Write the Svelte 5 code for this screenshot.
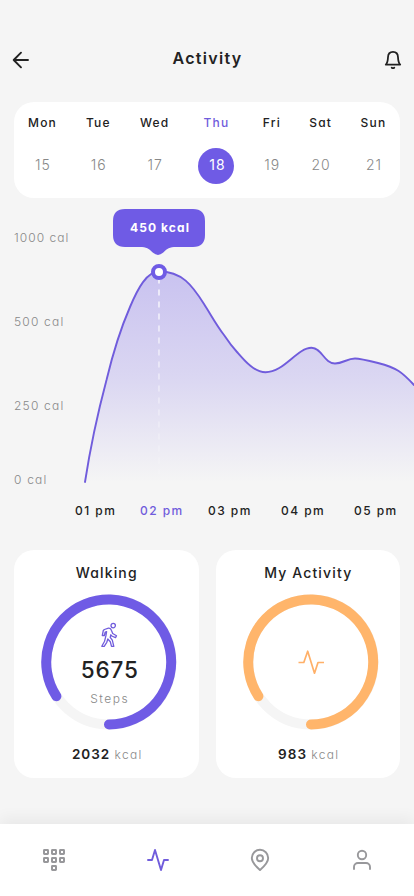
<script>
  const days = [
    { name: 'Mon', date: 15, width: 29 },
    { name: 'Tue', date: 16, width: 25 },
    { name: 'Wed', date: 17, width: 30 },
    { name: 'Thu', date: 18, width: 36, active: true },
    { name: 'Fri', date: 19, width: 17 },
    { name: 'Sat', date: 20, width: 23 },
    { name: 'Sun', date: 21, width: 25 }
  ];
  const levels = ['1000 cal', '500 cal', '250 cal', '0 cal'];
  const hours = ['01 pm', '02 pm', '03 pm', '04 pm', '05 pm'];
  const curve =
    'M85 284C89 258 98 214 106.500 182C112.500 157 120 132 130 109C138 90 147 73.500 159 73.500C182 73.500 192 87 204 106C211 117 217 128 224 137C228 143 232 148.500 237 154C244 162 254 174.300 265.500 174.300C284 174.300 297 149.800 311.500 149.800C322 149.800 324 165.500 335 165.500C343 165.500 347 160.500 355 160.500C359 160.500 370 163 378 165C397 170 402 174 414 187';
</script>

{#snippet ring(color)}
  <svg class="ring" viewBox="0 0 136 136" fill="none" stroke-width="10">
    <circle cx="68" cy="68" r="62.500" stroke="#f5f5f5" />
    <path d="M68 130.500A62.500 62.500 0 1 0 15.400 102.200" stroke={color} stroke-linecap="round" />
  </svg>
{/snippet}

<div class="screen">
  <header>
    <svg class="back" width="24" height="24" viewBox="0 0 24 24" fill="none" stroke="#222" stroke-width="1.900" stroke-linecap="round" stroke-linejoin="round">
      <path d="M19 12H4.700M12 4.700L4.700 12L12 19.300" />
    </svg>
    <h1>Activity</h1>
    <svg class="bell" width="20" height="22" viewBox="0 0 20 22" fill="none" stroke="#222" stroke-width="1.800" stroke-linejoin="round" stroke-linecap="round">
      <path d="M2.800 15.600H17.200C15.600 14.200 15.200 12.400 15 8.200C14.900 4.600 13 2.800 10 2.800S5.100 4.600 5 8.200C4.800 12.400 4.400 14.200 2.800 15.600Z" />
      <path d="M8.700 18.600C9.400 19.400 10.600 19.400 11.300 18.600" />
    </svg>
  </header>

  <section class="week">
    {#each days as d}
      <div class="day" class:active={d.active} style:width="{d.width}px">
        <span class="name">{d.name}</span>
        <span class="date">{d.date}</span>
      </div>
    {/each}
  </section>

  <section class="chart">
    <svg class="plot" width="414" height="294" viewBox="0 0 414 294" fill="none">
      <defs>
        <linearGradient id="area" x1="0" y1="73" x2="0" y2="284" gradientUnits="userSpaceOnUse">
          <stop offset="0" stop-color="#6f5be5" stop-opacity=".33" />
          <stop offset=".5" stop-color="#6f5be5" stop-opacity=".2" />
          <stop offset="1" stop-color="#6f5be5" stop-opacity="0" />
        </linearGradient>
        <linearGradient id="dash" x1="0" y1="80" x2="0" y2="274" gradientUnits="userSpaceOnUse">
          <stop offset="0" stop-color="#fff" stop-opacity=".75" />
          <stop offset="1" stop-color="#fff" stop-opacity=".1" />
        </linearGradient>
      </defs>
      <path d="{curve}V284Z" fill="url(#area)" />
      <path d={curve} stroke="#705cdc" stroke-width="1.900" stroke-linecap="round" />
      <path d="M159 79.500L158.900 276" stroke="url(#dash)" stroke-width="1.800" stroke-dasharray="6 6" />
      <circle cx="159" cy="74" r="6" fill="#fff" stroke="#6f5be5" stroke-width="4" />
      <path d="M125 11H193Q205 11 205 23V37Q205 49 193 49H174C168 49.300 166 52 163 54.800Q158 59 153 54.800C150 52 148 49.300 142 49H125Q113 49 113 37V23Q113 11 125 11Z" fill="#6f5be5" />
    </svg>
    <div class="levels">
      {#each levels as l}<span>{l}</span>{/each}
    </div>
    <strong class="tip">450 kcal</strong>
  </section>

  <div class="hours">
    {#each hours as h, i}<span class:active={i === 1}>{h}</span>{/each}
  </div>

  <section class="cards">
    <article>
      <h2>Walking</h2>
      <div class="dial">
        {@render ring('#6f5be5')}
        <div class="inside">
          <svg class="walker" width="18" height="26" viewBox="0 0 18 26" fill="none" stroke="#705cdc" stroke-width="1.300" stroke-linejoin="round">
            <circle cx="13.200" cy="3.600" r="2.200" />
            <path d="M4.400 7.500L8.500 6.200C10.300 5.900 11 7 11.500 8.500L12.700 11.500L16.500 13.700L15.500 15.700L11.800 14L10.800 12.800L10.200 15.300L12.300 18.200L13.800 24.300H11.500L10.300 19.700L7.800 17L6.800 20.300L4.200 24.300H1.800L4.600 19.200L6 13.400L6.600 9.600L5.200 10L4.400 13.500H2.300L3.300 8.500Z" />
          </svg>
          <strong>5675</strong>
          <small>Steps</small>
        </div>
      </div>
      <p><b>2032</b> <span>kcal</span></p>
    </article>
    <article>
      <h2>My Activity</h2>
      <div class="dial">
        {@render ring('#ffb56b')}
        <div class="inside centered">
          <svg width="28" height="26" viewBox="0 0 28 26" fill="none" stroke="#ffb068" stroke-width="1.700" stroke-linejoin="round">
            <path d="M1.500 13.500H6.800L10.700 2.200L17.500 24.200L21 13.500H27" />
          </svg>
        </div>
      </div>
      <p><b>983</b> <span>kcal</span></p>
    </article>
  </section>

  <nav>
    <svg width="24" height="24" viewBox="0 0 24 24" fill="none" stroke="#98989b" stroke-width="2">
      {#each [[2, 2], [10, 2], [18, 2], [2, 10], [10, 10], [18, 10], [10, 18]] as [x, y]}
        <rect {x} {y} width="4" height="4" rx=".4" />
      {/each}
    </svg>
    <svg class="pulse" width="24" height="24" viewBox="0 0 24 24" fill="none" stroke="#705cdc" stroke-width="1.900" stroke-linejoin="round" stroke-linecap="round">
      <path d="M2 12H6L9 2L15 22L18 12H22" />
    </svg>
    <svg class="pin" width="24" height="24" viewBox="0 0 24 24" fill="none" stroke="#98989b" stroke-width="1.900" stroke-linejoin="round">
      <path d="M12 22C8.800 19.200 3.800 15 3.800 10A8.200 8.200 0 0 1 20.200 10C20.200 15 15.200 19.200 12 22Z" />
      <circle cx="12" cy="10.200" r="3" />
    </svg>
    <svg width="24" height="24" viewBox="0 0 24 24" fill="none" stroke="#98989b" stroke-width="1.900" stroke-linecap="round">
      <circle cx="12" cy="7" r="4.200" />
      <path d="M4 21V19A4 4 0 0 1 8 15H16A4 4 0 0 1 20 19V21" />
    </svg>
  </nav>
</div>

<style>
  :global(body) {
    background: #f5f5f5;
  }
  .screen {
    box-sizing: border-box;
    width: 414px;
    height: 896px;
    overflow: hidden;
    display: flex;
    flex-direction: column;
    background: #f5f5f5;
    color: #222;
    font-family: Inter, 'Open Sans', sans-serif;
    font-feature-settings: 'cv11';
    font-size: 12px;
    letter-spacing: 1px;
  }
  header {
    box-sizing: border-box;
    height: 102px;
    padding: 15px 11px 0 9px;
    display: flex;
    align-items: center;
    justify-content: space-between;
  }
  .back { margin-top: 3px; }
  .bell { margin-top: 2px; }
  h1 {
    margin: -2px 0 0 -1px;
    font-size: 16px;
    font-weight: 600;
    letter-spacing: 1.300px;
  }
  .week {
    box-sizing: border-box;
    height: 96px;
    margin: 0 14px;
    padding: 13px 14px 0;
    border-radius: 20px;
    background: #fff;
    display: flex;
    justify-content: space-between;
  }
  .day {
    display: flex;
    flex-direction: column;
    align-items: center;
    white-space: nowrap;
  }
  .name {
    line-height: 15px;
    height: 33px;
    font-weight: 450;
    letter-spacing: 1.200px;
    margin-left: -1px;
    margin-right: -1px;
  }
  .date {
    width: 36px;
    height: 36px;
    margin: 0 -10px;
    border-radius: 50%;
    line-height: 34px;
    text-align: center;
    text-indent: 1px;
    font-size: 14px;
    font-weight: 300;
    color: #888;
  }
  .active .name { color: #705cdc; }
  .active .date {
    background: #6f5be5;
    color: #fff;
    font-weight: 400;
    text-indent: 2px;
  }
  .chart {
    display: grid;
    height: 294px;
  }
  .chart > * { grid-area: 1 / 1; }
  .levels {
    display: grid;
    grid-template-rows: 84px 84px 74px 20px;
    padding: 30px 0 0 14px;
    line-height: 20px;
    font-weight: 300;
    color: #888;
    letter-spacing: 1.200px;
  }
  .levels span:first-child { letter-spacing: 1.050px; }
  .tip {
    justify-self: start;
    margin: 20px 0 0 113px;
    width: 94px;
    height: 20px;
    line-height: 20px;
    text-align: center;
    color: #fff;
    font-weight: 700;
    letter-spacing: 1.100px;
  }
  .hours {
    box-sizing: border-box;
    height: 58px;
    padding: 10px 0 0 75px;
    display: grid;
    grid-template-columns: 65px 68px 73px 73px auto;
    line-height: 18px;
    font-weight: 450;
    letter-spacing: 1.450px;
    white-space: nowrap;
  }
  .hours .active { color: #705cdc; }
  .cards {
    display: flex;
    gap: 17px;
    padding: 0 14px;
  }
  article {
    box-sizing: border-box;
    flex: 1;
    height: 228px;
    padding-top: 14px;
    border-radius: 20px;
    background: #fff;
    display: flex;
    flex-direction: column;
    align-items: center;
  }
  h2 {
    margin: 0 0 12px;
    height: 18px;
    line-height: 18px;
    font-size: 14px;
    font-weight: 500;
    letter-spacing: 1.150px;
    text-indent: 1px;
  }
  .dial {
    display: grid;
    width: 136px;
    height: 136px;
    margin-left: 6px;
  }
  .dial > * { grid-area: 1 / 1; }
  .inside {
    display: flex;
    flex-direction: column;
    align-items: center;
    padding-top: 28px;
  }
  .centered {
    padding: 0;
    justify-content: center;
  }
  .inside strong {
    margin: 5px 0 0 1px;
    font-size: 22.500px;
    line-height: 33px;
    font-weight: 500;
    letter-spacing: .900px;
  }
  .inside small {
    margin: 4.500px 0 0 1px;
    font-size: 12px;
    line-height: 16px;
    font-weight: 300;
    color: #888;
    letter-spacing: 1.500px;
  }
  p {
    margin: 14px 0 0 2px;
    line-height: 20px;
    white-space: nowrap;
  }
  p b {
    font-size: 13.500px;
    font-weight: 600;
  }
  p span {
    font-weight: 300;
    color: #888;
    letter-spacing: 1.300px;
  }
  nav {
    box-sizing: border-box;
    margin-top: auto;
    height: 72px;
    padding: 0 40px 0 42px;
    background: #fff;
    box-shadow: 0 -6px 14px rgba(0, 0, 0, .05);
    display: flex;
    align-items: center;
    justify-content: space-between;
  }
  .pulse { margin: 0 -1px 0 1px; }
  .pin { margin: 0 -1px 0 1px; }
</style>
